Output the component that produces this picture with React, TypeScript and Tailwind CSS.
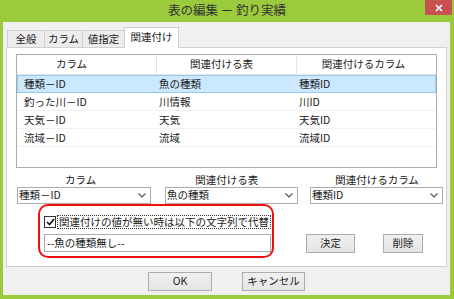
const rows = [
  { col: "種類－ID", table: "魚の種類", target: "種類ID", selected: true },
  { col: "釣った川－ID", table: "川情報", target: "川ID" },
  { col: "天気－ID", table: "天気", target: "天気ID" },
  { col: "流域－ID", table: "流域", target: "流域ID" },
];

const Chevron = () => (
  <svg width="8" height="5" viewBox="0 0 8 5" className="shrink-0">
    <path d="M0.5 0.5 L4 4 L7.5 0.5" fill="none" stroke="#555" strokeWidth="1.2" />
  </svg>
);

const Combo = ({ value, w }: { value: string; w: string }) => (
  <div className={`${w} h-[17px] bg-white border border-[#acacac] flex items-center pl-[1px] pr-[4px]`}>
    <span className="flex-1 leading-none">{value}</span>
    <Chevron />
  </div>
);

const Btn = ({ label, w }: { label: string; w: string }) => (
  <div className={`${w} h-[19px] border border-[#acacac] bg-gradient-to-b from-[#f0f0f0] to-[#e5e5e5] flex items-center justify-center leading-none`}>
    {label}
  </div>
);

export default function App() {
  return (
    <div className="w-[454px] h-[299px] bg-[#9bcb3d] flex flex-col text-[10.5px] text-[#1a1a1a] font-['Noto_Sans_CJK_JP','Noto_Sans',sans-serif] overflow-hidden">
      {/* title bar */}
      <div className="h-[22px] relative flex items-start justify-center shrink-0">
        <span className="text-[12.5px] text-[#333] mt-[2px] leading-[16px]">表の編集 － 釣り実績</span>
        <div className="absolute top-0 right-[2px] w-[27px] h-[15px] bg-[#c75050] flex items-center justify-center">
          <svg width="8" height="8" viewBox="0 0 8 8">
            <path d="M1 1 L7 7 M7 1 L1 7" stroke="#fff" strokeWidth="1.6" />
          </svg>
        </div>
      </div>

      {/* client */}
      <div className="flex-1 ml-[3px] mr-[4px] mb-[4px] bg-[#f0f0f0] flex flex-col">
        {/* tabs */}
        <div className="ml-[3px] mt-[5px] h-[20px] flex items-end relative z-10">
          <div className="ml-[1px] w-[38px] h-[17px] border border-b-0 border-[#d0d0d0] bg-[#ececec] flex items-center justify-center leading-none">全般</div>
          <div className="w-[38px] h-[17px] border border-l-0 border-b-0 border-[#d0d0d0] bg-[#ececec] flex items-center justify-center leading-none">カラム</div>
          <div className="w-[42px] h-[17px] border border-l-0 border-b-0 border-[#d0d0d0] bg-[#ececec] flex items-center justify-center leading-none">値指定</div>
          <div className="w-[55px] h-[21px] -mb-[1px] -ml-[1px] border border-b-0 border-[#d0d0d0] bg-white flex items-center justify-center leading-none pb-[1px]">関連付け</div>
        </div>

        {/* tab panel */}
        <div className="ml-[3px] w-[441px] h-[220px] border border-[#d0d0d0] bg-white flex flex-col">
          {/* list view */}
          <div className="ml-[9px] mt-[6px] w-[421px] h-[114px] border border-[#acacac] flex flex-col">
            <div className="h-[20px] flex border-b border-[#e5e5e5]">
              <div className="w-[140px] border-r border-[#e5e5e5] flex items-center justify-center pr-[30px] leading-none">カラム</div>
              <div className="w-[140px] border-r border-[#e5e5e5] flex items-center justify-center pr-[10px] leading-none">関連付ける表</div>
              <div className="flex-1 flex items-center justify-center pr-[6px] leading-none">関連付けるカラム</div>
            </div>
            {rows.map((r) => (
              <div
                key={r.col}
                className={`h-[18px] flex items-center leading-none border ${
                  r.selected ? "bg-[#cce8ff] border-[#99c9ef]" : "border-transparent border-b-[#f0f0f0]"
                }`}
              >
                <div className="w-[139px] pl-[6px]">{r.col}</div>
                <div className="w-[140px] pl-[2px]">{r.table}</div>
                <div className="flex-1 pl-[2px]">{r.target}</div>
              </div>
            ))}
          </div>

          {/* labels */}
          <div className="h-[19px] flex items-end leading-none pb-[2px] whitespace-nowrap">
            <div className="ml-[58px]">カラム</div>
            <div className="ml-[99px]">関連付ける表</div>
            <div className="ml-[77px]">関連付けるカラム</div>
          </div>

          {/* combos */}
          <div className="flex ml-[10px]">
            <Combo value="種類－ID" w="w-[134px]" />
            <div className="ml-[14px]">
              <Combo value="魚の種類" w="w-[133px]" />
            </div>
            <div className="ml-[12px]">
              <Combo value="種類ID" w="w-[133px]" />
            </div>
          </div>

          {/* bottom section */}
          <div className="flex items-start">
            <div className="ml-[31px] w-[236px] h-[54px] border-2 border-[#ee1111] rounded-[10px] flex flex-col pl-[4px] pt-[9px]">
              <div className="flex items-center h-[14px]">
                <div className="w-[12px] h-[12px] border border-[#333] bg-white flex items-center justify-center">
                  <svg width="9" height="8" viewBox="0 0 9 8">
                    <path d="M1 4 L3.5 6.5 L8 1" fill="none" stroke="#111" strokeWidth="1.7" />
                  </svg>
                </div>
                <div className="ml-[1px] h-[14px] border border-dotted border-[#333] flex items-center px-[1px] leading-none whitespace-nowrap">
                  関連付けの値が無い時は以下の文字列で代替
                </div>
              </div>
              <div className="mt-[5px] w-[227px] h-[18px] border border-[#abadb3] bg-white flex items-center pl-[2px] leading-none">
                --魚の種類無し--
              </div>
            </div>
            <div className="ml-[32px] mt-[30px]">
              <Btn label="決定" w="w-[49px]" />
            </div>
            <div className="ml-[28px] mt-[30px]">
              <Btn label="削除" w="w-[40px]" />
            </div>
          </div>
        </div>

        {/* dialog buttons */}
        <div className="flex mt-[5px] ml-[145px]">
          <Btn label="OK" w="w-[64px]" />
          <div className="ml-[30px]">
            <Btn label="キャンセル" w="w-[63px]" />
          </div>
        </div>
      </div>
    </div>
  );
}
